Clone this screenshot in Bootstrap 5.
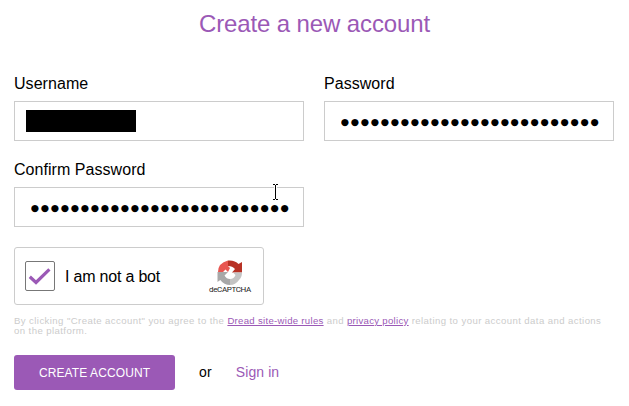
<!DOCTYPE html>
<html lang="en">
<head>
<meta charset="utf-8">
<meta name="viewport" content="width=device-width, initial-scale=1">
<title>Create a new account</title>
<link rel="stylesheet" href="https://cdn.jsdelivr.net/npm/bootstrap@5.3.0/dist/css/bootstrap.min.css">
<style>
body{font:16px/20px "Liberation Sans",Arial,sans-serif;color:#000;background:#fff;overflow:hidden}
.page{padding:8px 15px 0 14px}
.title{font-size:24px;line-height:32px;color:#9b59b6;margin-bottom:34px;font-weight:400;letter-spacing:-.12px;padding-left:1px}
.fields{display:grid;grid-template-columns:290px 290px;column-gap:20px;row-gap:19px}
.fields label{display:block;line-height:20px;margin-bottom:7px;letter-spacing:.05px}
.entry{height:40px;border:1px solid #ccc;border-radius:0;padding:0 12px 0 11px;font-size:16px;color:#000}
.entry.secret{font-family:"DejaVu Sans",sans-serif;font-size:9.5px;letter-spacing:1.7px;padding:0 0 0 15.8px}
.redacted{width:110px;height:22px;background:#000}
.bot{width:250px;height:58px;border:1px solid #ccc;border-radius:3px;margin-top:20px;padding:0 11px 0 10px}
.tick{width:30px;height:30px;border:1px solid #777;border-radius:2px;margin-right:10px}
.tick svg,.brand svg{display:block}
.bot-label{letter-spacing:-.2px;padding-top:2px}
.brand{width:44px;font:8px/9px Roboto,sans-serif;letter-spacing:-.37px;color:#222;padding-top:1px}
.terms{font-size:9.6px;line-height:10px;color:#ccc;margin:11px 0 19px;letter-spacing:.41px}
.terms a{color:#9b59b6;letter-spacing:.29px}
.create{width:161px;height:35px;background:#9b59b6;border:0;border-radius:3px;color:#fff;font-size:12px;letter-spacing:.1px;padding:0}
.actions{font-size:14px}
.actions a{color:#9b59b6;letter-spacing:.08px}
.actions .other{letter-spacing:.2px}
.actions .other,.actions a{padding-bottom:1px}
.pointer{left:271px;top:183px}
</style>
<script src="https://cdn.jsdelivr.net/npm/bootstrap@5.3.0/dist/js/bootstrap.bundle.min.js"></script>
</head>
<body>
<main class="page">
<h1 class="title text-center">Create a new account</h1>
<form>
<div class="fields">
<div><label>Username</label><div class="entry d-flex align-items-center"><div class="redacted"></div></div></div>
<div><label for="pw">Password</label><input id="pw" class="entry secret form-control" value="●●●●●●●●●●●●●●●●●●●●●●●●●●"></div>
<div><label for="pw2">Confirm Password</label><input id="pw2" class="entry secret form-control" value="●●●●●●●●●●●●●●●●●●●●●●●●●●"></div>
</div>
<div class="bot d-flex align-items-center">
<span class="tick d-flex align-items-center justify-content-center"><svg width="28" height="28" viewBox="0 0 28 28"><path d="M3.8 14.8L10 20.5L23.4 7.3" fill="none" stroke="#9b59b6" stroke-width="3.2"/></svg></span>
<span class="bot-label">I am not a bot</span>
<span class="brand ms-auto d-flex flex-column align-items-center">
<svg width="28" height="25" viewBox="0 0 28 25"><path d="M2 12Q2 3 12 .5V6L14 8L12 12L9.5 9.5L7 12Z" fill="#e85550"/><path d="M12 .5Q19 0 22.5 4L26 2V12.5H16L19 9Q16.5 6 12 6Z" fill="#b83225"/><path d="M1.5 12H12L8.5 15.5Q10.5 19 14 19V25Q8 25 4.3 20L1.5 22Z" fill="#a8a8a8"/><path d="M14 19Q18 19 19.5 15L17 12.5H26Q26 17 23 20Q19.5 25 14 25Z" fill="#c4c4c4"/></svg>
<span>deCAPTCHA</span></span>
</div>
<p class="terms">By clicking "Create account" you agree to the <a href="#">Dread site-wide rules</a> and <a href="#">privacy policy</a> relating to your account data and actions<br>on the platform.</p>
<div class="actions d-flex align-items-center"><button type="button" class="create btn">CREATE ACCOUNT</button><span class="other ms-4 me-4">or</span><a href="#" class="text-decoration-none">Sign in</a></div>
</form>
<svg class="pointer position-absolute" width="9" height="18" viewBox="0 0 9 18"><path d="M1.5 1.5H3.5L4.5 2.5L5.5 1.5H7.5M4.5 2V16M1.5 16.5H3.5L4.5 15.5L5.5 16.5H7.5" fill="none" stroke="#fff" stroke-width="3"/><path d="M2 1.5H4M5 1.5H7M4.5 2V16M2 16.5H4M5 16.5H7" fill="none" stroke="#000"/></svg>
</main>
</body>
</html>
